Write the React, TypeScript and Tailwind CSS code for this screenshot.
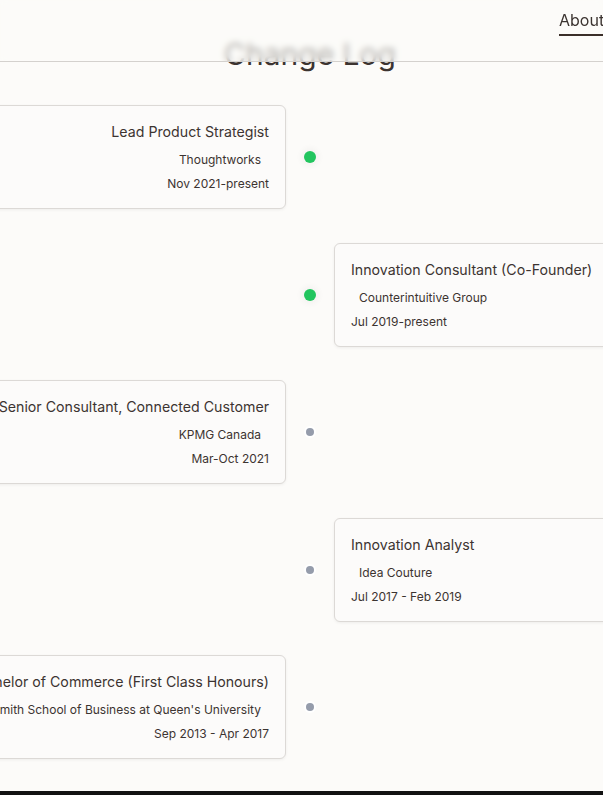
const entries = [
  {
    title: 'Lead Product Strategist',
    company: 'Thoughtworks',
    date: 'Nov 2021-present',
    current: true,
  },
  {
    title: 'Innovation Consultant (Co-Founder)',
    company: 'Counterintuitive Group',
    date: 'Jul 2019-present',
    current: true,
  },
  {
    title: 'Senior Consultant, Connected Customer',
    company: 'KPMG Canada',
    date: 'Mar-Oct 2021',
    current: false,
  },
  {
    title: 'Innovation Analyst',
    company: 'Idea Couture',
    date: 'Jul 2017 - Feb 2019',
    current: false,
  },
  {
    title: 'Bachelor of Commerce (First Class Honours)',
    company: "Smith School of Business at Queen's University",
    date: 'Sep 2013 - Apr 2017',
    current: false,
  },
];

type Entry = (typeof entries)[number];

const Card = ({ entry, side }: { entry: Entry; side: 'left' | 'right' }) => {
  const left = side === 'left';
  return (
    <div
      className={`rounded-md border border-[#dcd9d6] bg-[#fcfbfa] p-4 shadow-[0_1px_3px_rgba(0,0,0,0.06)] ${
        left ? 'text-right' : 'text-left'
      }`}
    >
      <h3 className="text-[14.2px] leading-5 whitespace-nowrap">{entry.title}</h3>
      <p
        className={`mt-2.5 text-xs leading-4 whitespace-nowrap ${left ? 'mr-2' : 'ml-2'}`}
      >
        {entry.company}
      </p>
      <p className="mt-2 text-xs leading-4 whitespace-nowrap">{entry.date}</p>
    </div>
  );
};

const Dot = ({ current }: { current: boolean }) =>
  current ? (
    <span className="h-3 w-3 rounded-full bg-[#22c55e] shadow-[0_0_6px_3px_rgba(0,0,0,0.04)]" />
  ) : (
    <span className="h-2 w-2 rounded-full bg-[#959cab] ring-2 ring-white" />
  );

const App = () => {
  return (
    <div
      className="relative min-h-screen w-full overflow-hidden bg-[#fcfbf9] text-[#3c3431]"
      style={{ fontFamily: 'Inter, "Noto Sans", sans-serif' }}
    >
      <header className="absolute inset-x-0 top-0 z-10 h-[62px] border-b border-[#d4d1ce] bg-[#fcfbf9]/60 backdrop-blur-[3px]">
        <nav className="flex pl-[559px]">
          <a className="mt-2 border-b-2 border-[#3b2f2a] pb-[2px] text-base leading-6 whitespace-nowrap">
            About
          </a>
        </nav>
      </header>

      <main className="ml-[-140px] w-[900px] pt-[36px] pb-8">
        <h2 className="text-center text-3xl leading-9 font-normal">Change Log</h2>
        <div className="mt-[33px] flex flex-col gap-[33.5px]">
          {entries.map((entry, i) => {
            const left = i % 2 === 0;
            return (
              <div key={entry.title} className="grid grid-cols-[1fr_48px_1fr] items-center">
                <div>{left && <Card entry={entry} side="left" />}</div>
                <div className="flex items-center justify-center">
                  <Dot current={entry.current} />
                </div>
                <div>{!left && <Card entry={entry} side="right" />}</div>
              </div>
            );
          })}
        </div>
      </main>
      <footer className="h-24 bg-[#121212]" />
    </div>
  );
};

export default App;
